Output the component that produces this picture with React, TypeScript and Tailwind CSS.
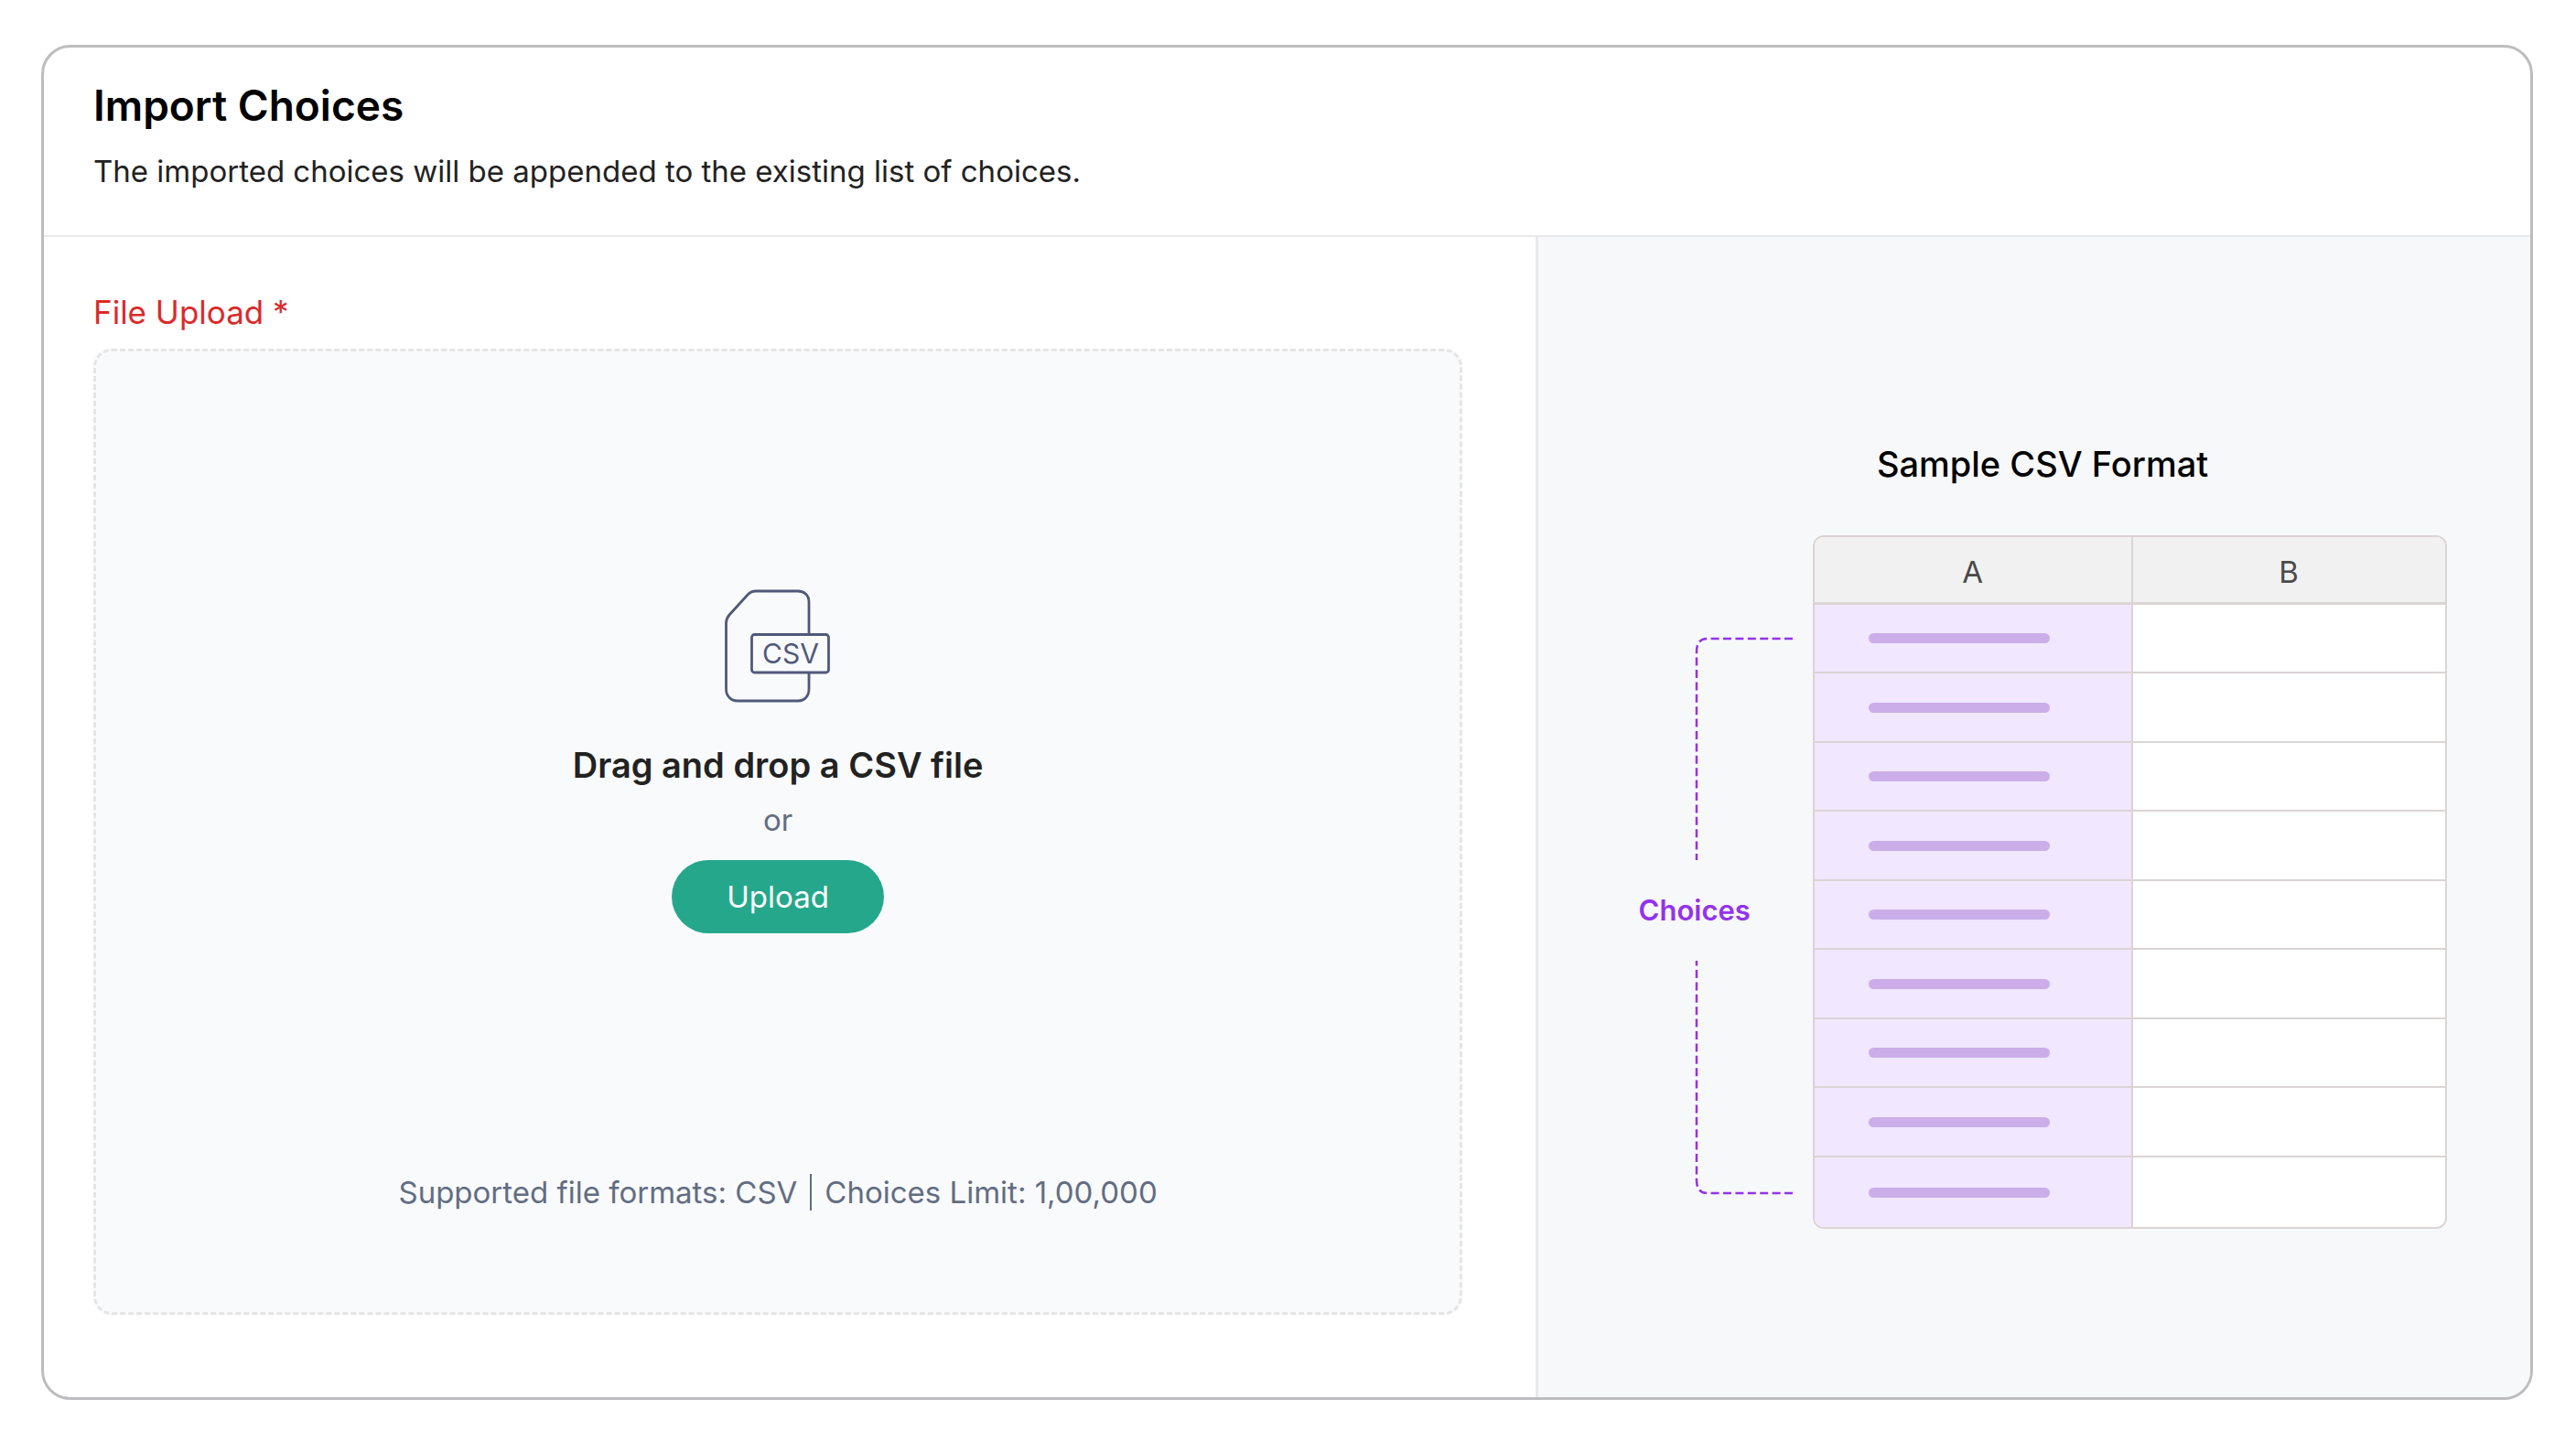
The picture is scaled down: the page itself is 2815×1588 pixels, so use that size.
import React, { useRef, useState } from "react";

const rows = [1, 2, 3, 4, 5, 6, 7, 8, 9];

function CsvIcon() {
  return (
    <svg width="116" height="124" viewBox="0 0 116 124" fill="none" stroke="#51597a" strokeWidth="2.8" aria-hidden="true">
      <path d="M92 49V14C92 6.500 87 2 80 2H34C30 2 28 3 25.500 5.500L5 28C2.500 31 1.500 33 1.500 37V109C1.500 117 7 122 14 122H80C87 122 92 117 92 109V92" />
      <rect x="29.500" y="49.500" width="84" height="41.500" rx="3" />
      <text x="72" y="81" textAnchor="middle" fill="#51597a" stroke="none" fontSize="30" fontFamily="Inter, sans-serif">
        CSV
      </text>
    </svg>
  );
}

function BracketTop() {
  return (
    <svg width="107" height="244" viewBox="0 0 107 244" fill="none" stroke="#9333ea" strokeWidth="2.5" strokeDasharray="9 4.4" className="self-end" aria-hidden="true">
      <path d="M107 2H14Q2 2 2 16V244" />
    </svg>
  );
}

function BracketBottom() {
  return (
    <svg width="107" height="256" viewBox="0 0 107 256" fill="none" stroke="#9333ea" strokeWidth="2.5" strokeDasharray="9 4.4" className="self-end" aria-hidden="true">
      <path d="M107 254H14Q2 254 2 240V0" />
    </svg>
  );
}

function UploadPanel() {
  const inputRef = useRef<HTMLInputElement>(null);
  const [file, setFile] = useState<File | null>(null);

  const handleDrop = (e: React.DragEvent) => {
    e.preventDefault();
    setFile(e.dataTransfer.files[0] || null);
  };

  return (
    <section className="flex w-3/5 flex-col pt-[58px] pr-20 pb-[90px] pl-[54px]">
      <label htmlFor="csv-file" className="mb-4 self-start text-[35px] leading-12 text-[#d92b2b]">
        File Upload *
      </label>
      <div
        onDragOver={(e) => e.preventDefault()}
        onDrop={handleDrop}
        className="flex flex-1 flex-col items-center rounded-[20px] border-[3px] border-dashed border-[#e5e5e5] bg-[#f9fafc]"
      >
        <div className="flex flex-1 flex-col items-center justify-center">
          <CsvIcon />
          <p className="mt-11 text-[38px] leading-12 font-semibold text-[#222222]">{file ? file.name : "Drag and drop a CSV file"}</p>
          <p className="mt-3 text-[33px] leading-12 text-[#626d82]">or</p>
          <input ref={inputRef} id="csv-file" type="file" accept=".csv" className="hidden" onChange={(e) => setFile(e.target.files?.[0] || null)} />
          <button
            type="button"
            onClick={() => inputRef.current?.click()}
            className="mt-5 h-20 rounded-full bg-[#25a78b] px-[60px] text-[33px] leading-12 text-white"
          >
            Upload
          </button>
        </div>
        <p className="flex items-center gap-[14px] pb-[107px] text-[33px] leading-12 text-[#626d82]">
          <span>Supported file formats: CSV</span>
          <span className="h-10 w-0.5 bg-[#626d82]" />
          <span>Choices Limit: 1,00,000</span>
        </p>
      </div>
    </section>
  );
}

function SamplePanel() {
  return (
    <section className="flex w-2/5 flex-col items-center border-l-[3px] border-[#e9e9e9] bg-[#f7f8fa] pt-56 pl-[18px]">
      <h2 className="text-[38px] leading-12 font-medium text-black">Sample CSV Format</h2>
      <div className="mt-[54px] flex gap-[22px]">
        <div className="flex w-[168px] flex-col pt-[111px]">
          <BracketTop />
          <span className="my-[35px] text-[31px] leading-10 font-semibold text-[#9333ea]">Choices</span>
          <BracketBottom />
        </div>
        <div className="overflow-hidden rounded-xl border-2 border-[#dbd4d4]">
          <table className="border-separate border-spacing-0 bg-white">
            <thead>
              <tr className="h-[74px] bg-[#f1f1f1] text-[33px] leading-12 text-[#4a4a4a]">
                <th className="w-[348px] border-r-2 border-b-[3px] border-[#dbd4d4] pt-1 font-normal">A</th>
                <th className="w-[341px] border-b-[3px] border-[#dbd4d4] pt-1 font-normal">B</th>
              </tr>
            </thead>
            <tbody>
              {rows.map((row) => (
                <tr key={row} className="group h-[75px] last:h-[76px] even:h-[76px]">
                  <td className="border-r-2 border-b-2 border-[#dbd4d4] bg-[#f1e7fe] pl-[59px] group-last:border-b-0">
                    <div className="h-[11px] w-[198px] rounded-full bg-[#cbaee9]" />
                  </td>
                  <td className="border-b-2 border-[#dbd4d4] group-last:border-b-0" />
                </tr>
              ))}
            </tbody>
          </table>
        </div>
      </div>
    </section>
  );
}

export default function App() {
  return (
    <div className="flex min-h-screen flex-col bg-white pt-[49px] pr-[47px] pb-[58px] pl-[45px] font-[Inter,sans-serif]">
      <main className="flex flex-1 flex-col overflow-hidden rounded-[32px] border-[3px] border-[#bdbdbf]">
        <header className="border-b-2 border-[#e9e9e9] px-[54px] pt-[35px] pb-[46px]">
          <h1 className="text-[46px] leading-14 font-semibold text-black">Import Choices</h1>
          <p className="mt-5 text-[33px] leading-12 text-[#222222]">The imported choices will be appended to the existing list of choices.</p>
        </header>
        <div className="flex flex-1">
          <UploadPanel />
          <SamplePanel />
        </div>
      </main>
    </div>
  );
}
